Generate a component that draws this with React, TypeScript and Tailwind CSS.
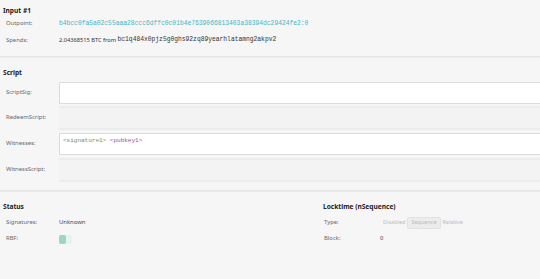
import React from 'react';

const sans = "font-['Noto_Sans',_'Open_Sans',_sans-serif]";
const mono = "font-['Liberation_Mono',_'DejaVu_Sans_Mono',_monospace]";

const Row: React.FC<{ label: string; h: string; children?: React.ReactNode }> = ({ label, h, children }) => (
  <div className={`flex items-center ${h}`}>
    <div className="w-[59px] shrink-0 pl-[6px] text-[5.9px] leading-none text-[#666]">{label}</div>
    <div className="flex-1 min-w-0 flex items-center leading-none">{children}</div>
  </div>
);

const Divider = () => <div className="h-[2px] bg-[#e6e6e6] border-b border-[#ececec]" />;

const App: React.FC = () => {
  return (
    <div className={`w-[540px] h-[279px] overflow-hidden bg-[#f6f6f6] ${sans}`}>
      {/* Input */}
      <div className="pt-[5px] h-[56px]">
        <div className="pl-[3px] h-[11px] text-[6.6px] font-bold text-[#222] leading-[11px]">Input #1</div>
        <Row label="Outpoint:" h="h-[16px]">
          <span className={`${mono} text-[6.3px] text-[#45b4c4]`}>
            b4bcc0fa5a02c55aaa28ccc6dffc0c01b4e7639066813403a38394dc29424fe2:0
          </span>
        </Row>
        <Row label="Spends:" h="h-[17px]">
          <span className="text-[5.7px] text-[#333] whitespace-pre">2.04368515 BTC from </span>
          <span className={`${mono} text-[6.3px] text-[#333]`}>bc1q484x0pjz5g0ghs92zq89yearhlatamng2akpv2</span>
        </Row>
      </div>
      <Divider />

      {/* Script */}
      <div className="h-[132px] pt-[9px]">
        <div className="pl-[3px] h-[14px] text-[6.6px] font-bold text-[#222] leading-[11px]">Script</div>
        <Row label="ScriptSig:" h="h-[22px] mt-[1px]">
          <div className="h-[22px] w-full bg-white border border-[#dcdcdc] border-r-0" />
        </Row>
        <Row label="RedeemScript:" h="h-[24px] mt-[2px]">
          <div className="h-[24px] w-full bg-[#f3f3f3] border-t-2 border-b-2 border-[#ebebeb]" />
        </Row>
        <Row label="Witnesses:" h="h-[22px] mt-[3px]">
          <div className={`h-[22px] w-full bg-white border border-[#dcdcdc] border-r-0 px-[3px] pt-[2px] ${mono} text-[6px] leading-[10px] self-start`}>
            <span className="text-[#6f8f6f]">&lt;signature1&gt;</span>{' '}
            <span className="text-[#a048a8]">&lt;pubkey1&gt;</span>
          </div>
        </Row>
        <Row label="WitnessScript:" h="h-[24px] mt-[3px]">
          <div className="h-[24px] w-full bg-[#f3f3f3] border-t-2 border-b-2 border-[#ebebeb]" />
        </Row>
      </div>
      <Divider />

      {/* Status + Locktime */}
      <div className="flex pt-[9px]">
        <div className="w-[320px]">
          <div className="pl-[3px] h-[14px] text-[6.6px] font-bold text-[#222] leading-[11px]">Status</div>
          <Row label="Signatures:" h="h-[16px]">
            <span className="text-[5.9px] text-[#444]">Unknown</span>
          </Row>
          <Row label="RBF:" h="h-[16px]">
            <div className="w-[13px] h-[9px] rounded-[2px] bg-[#e8f3f1] flex items-center">
              <div className="w-[7px] h-[9px] rounded-[2px] bg-[#9bd6ca]" />
            </div>
          </Row>
        </div>
        <div className="flex-1">
          <div className="pl-[3px] h-[14px] text-[6.6px] font-bold text-[#222] leading-[11px]">Locktime (nSequence)</div>
          <div className="flex items-center h-[16px]">
            <div className="w-[61px] pl-[4px] text-[5.9px] leading-none text-[#666]">Type:</div>
            <div className="flex items-center text-[5.5px] leading-none text-[#bbb]">
              <div className="px-[2px] h-[11px] flex items-center">Disabled</div>
              <div className="px-[3px] h-[12px] flex items-center bg-[#ececec] rounded-[2px] border border-[#e2e2e2]">Sequence</div>
              <div className="px-[2px] h-[11px] flex items-center">Relative</div>
            </div>
          </div>
          <div className="flex items-center h-[16px]">
            <div className="w-[60px] pl-[4px] text-[5.9px] leading-none text-[#666]">Block:</div>
            <span className="text-[5.9px] leading-none text-[#444]">0</span>
          </div>
        </div>
      </div>
    </div>
  );
};

export default App;
